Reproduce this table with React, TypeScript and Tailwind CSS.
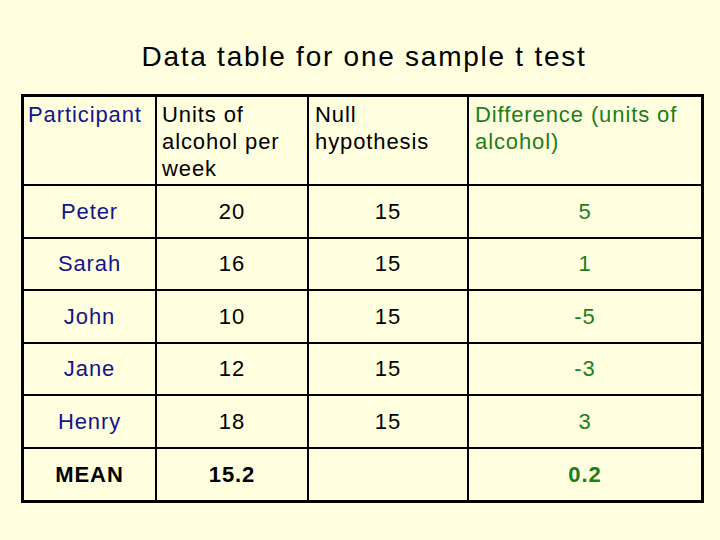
import React from "react";

const rows = [
  { name: "Peter", units: "20", nul: "15", diff: "5" },
  { name: "Sarah", units: "16", nul: "15", diff: "1" },
  { name: "John", units: "10", nul: "15", diff: "-5" },
  { name: "Jane", units: "12", nul: "15", diff: "-3" },
  { name: "Henry", units: "18", nul: "15", diff: "3" },
];

export default function App() {
  const cell = "border-black flex items-center justify-center";
  return (
    <div
      className="w-[720px] h-[540px] bg-[#ffffdf] text-black overflow-hidden"
      style={{ fontFamily: '"Liberation Sans", Arial, sans-serif' }}
    >
      <div className="pt-[41px] pl-[8px] h-[73px] text-center text-[28px] leading-[32px] tracking-[1.75px]">
        Data table for one sample t test
      </div>
      <div className="mt-[21px] ml-[21px] w-[683px] border-[3px] border-black grid grid-cols-[133px_152px_160px_232px] grid-rows-[89px_repeat(5,52.5px)_51px] text-[22px] tracking-[0.9px]">
        <div className="border-r-2 border-b-2 border-black pl-[4px] pt-[4px] leading-[27px] text-[#14148c]">
          Participant
        </div>
        <div className="border-r-2 border-b-2 border-black pl-[5px] pt-[4px] leading-[27px]">
          Units of
          <br />
          alcohol per
          <br />
          week
        </div>
        <div className="border-r-2 border-b-2 border-black pl-[6px] pt-[4px] leading-[27px]">
          Null
          <br />
          hypothesis
        </div>
        <div className="border-b-2 border-black pl-[6px] pt-[4px] leading-[27px] text-[#1d7d1d]">
          Difference (units of
          <br />
          alcohol)
        </div>
        {rows.map((r) => (
          <React.Fragment key={r.name}>
            <div className={`${cell} border-r-2 border-b-2 text-[#14148c]`}>{r.name}</div>
            <div className={`${cell} border-r-2 border-b-2`}>{r.units}</div>
            <div className={`${cell} border-r-2 border-b-2`}>{r.nul}</div>
            <div className={`${cell} border-b-2 text-[#1d7d1d]`}>{r.diff}</div>
          </React.Fragment>
        ))}
        <div className={`${cell} border-r-2 font-bold`}>MEAN</div>
        <div className={`${cell} border-r-2 font-bold`}>15.2</div>
        <div className={`${cell} border-r-2`}></div>
        <div className={`${cell} font-bold text-[#1d7d1d]`}>0.2</div>
      </div>
    </div>
  );
}
